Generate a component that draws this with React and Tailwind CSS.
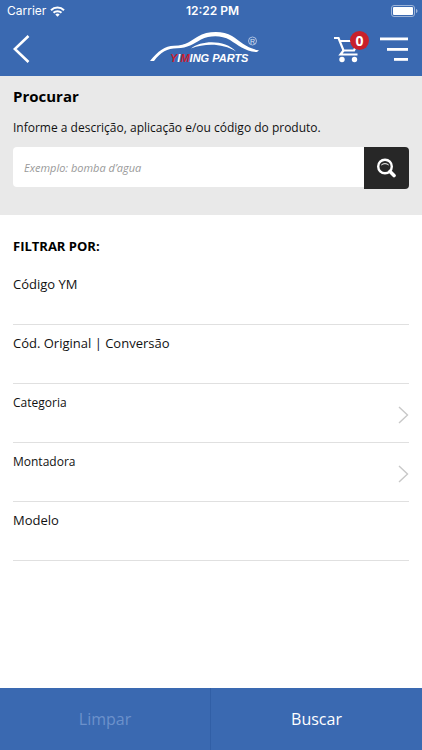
import React, { useState } from 'react';

const filters = [
  { id: 'codigo', label: 'Código YM', type: 'text' },
  { id: 'original', label: 'Cód. Original | Conversão', type: 'text' },
  { id: 'categoria', label: 'Categoria', type: 'picker' },
  { id: 'montadora', label: 'Montadora', type: 'picker' },
  { id: 'modelo', label: 'Modelo', type: 'text' },
];

const StatusBar = () => (
  <div className="grid h-[22px] grid-cols-3 items-center pl-[7px] pr-1 font-['Inter',sans-serif] text-xs">
    <div className="flex items-center gap-1">
      <span>Carrier</span>
      <svg viewBox="0 0 15 11" className="h-[11px] w-[15px]" fill="none" stroke="currentColor" strokeWidth="2">
        <path d="M1 4.2a9.2 9.2 0 0 1 13 0" />
        <path d="M3.5 6.8a5.7 5.7 0 0 1 8 0" />
        <path d="M7.5 10.8 5.3 8.6a3.1 3.1 0 0 1 4.4 0z" fill="currentColor" stroke="none" />
      </svg>
    </div>
    <span className="text-center font-semibold">12:22 PM</span>
    <svg viewBox="0 0 27 12" className="h-3 w-[27px] justify-self-end" fill="none">
      <rect x="0.5" y="0.5" width="23" height="11" rx="2.5" stroke="#9db4d8" />
      <rect x="2" y="2" width="20" height="8" rx="1" fill="#fff" />
      <path d="M25 4v4c1-.4 1.5-1.2 1.5-2s-.5-1.6-1.5-2z" fill="#9db4d8" />
    </svg>
  </div>
);

const Logo = () => (
  <svg viewBox="0 0 122 36" className="h-9 w-[122px]" role="img" aria-label="Yiming Parts">
    <path
      d="M0 30C8 20 15 14.7 24 14.7C37 14.7 41 9 48 5.5C57 0 73 -0.5 82 5C90 10 97 17.5 109 19.3L107 21C95 20.5 88 14 80 9C71 4 60 4.3 51 8.5C43 13 38 17 27 17.3C17 17.6 11 21 4 30Z"
      fill="#fff"
    />
    <path d="M41 17.5C52 8.5 76 9 86 20.5C73 12.5 56 12 41 17.5Z" fill="#fff" />
    <circle cx="102.5" cy="10" r="4" fill="none" stroke="#c7d5ec" strokeWidth="0.8" />
    <text x="102.5" y="12.5" textAnchor="middle" className="font-['Liberation_Sans',sans-serif] text-[7px]" fill="#dbe5f4">
      R
    </text>
    <text x="20" y="31" className="font-['Liberation_Sans',sans-serif] text-[11px] font-bold italic" fill="#fff">
      <tspan fill="#c8202f">Y</tspan>I<tspan fill="#c8202f">M</tspan>ING PARTS
    </text>
  </svg>
);

const CartIcon = () => (
  <svg viewBox="0 0 26 28" className="h-7 w-[26px]" fill="none" stroke="currentColor" strokeWidth="2.2">
    <path d="M0 3h4.5l5 12.5h10.5l4-8.5" />
    <path d="M5.5 6h16M9.5 15.5l-3 4h17" />
    <circle cx="8" cy="24.5" r="2.7" fill="currentColor" stroke="none" />
    <circle cx="20.5" cy="24.5" r="2.7" fill="currentColor" stroke="none" />
  </svg>
);

const Header = ({ cartCount }) => (
  <header className="bg-[#3a69b1] text-white">
    <StatusBar />
    <div className="grid h-[54px] grid-cols-[1fr_auto_1fr] items-center pl-[13px] pr-[14px]">
      <button type="button" aria-label="Voltar" className="justify-self-start">
        <svg viewBox="0 0 17 28" className="h-7 w-[17px]" fill="none" stroke="currentColor" strokeWidth="2.6">
          <path d="M15.5 1 1.8 14l13.7 13" />
        </svg>
      </button>
      <Logo />
      <div className="flex items-center gap-5 justify-self-end">
        <button type="button" aria-label="Carrinho" className="relative">
          <CartIcon />
          <span className="absolute -top-1 left-4 flex h-[19px] w-[19px] items-center justify-center rounded-full bg-[#c8202b] font-['Open_Sans',sans-serif] text-sm font-bold">
            {cartCount}
          </span>
        </button>
        <button type="button" aria-label="Menu">
          <svg viewBox="0 0 28 24" className="h-6 w-7" fill="currentColor">
            <rect x="0" y="0.5" width="28" height="2.8" />
            <rect x="7" y="11" width="21" height="2.8" />
            <rect x="14" y="21" width="14" height="2.8" />
          </svg>
        </button>
      </div>
    </div>
  </header>
);

const SearchIcon = () => (
  <svg viewBox="0 0 20 20" className="h-5 w-5" fill="none" stroke="currentColor">
    <circle cx="8" cy="8.5" r="6.8" strokeWidth="2.4" />
    <path d="M4.3 7c1.7-1.8 5.7-1.8 7.4 0" strokeWidth="1" />
    <path d="m13 13.5 4 4" strokeWidth="3.6" strokeLinecap="round" />
  </svg>
);

const FilterRow = ({ filter, value, onChange }) => {
  if (filter.type === 'picker') {
    return (
      <button
        type="button"
        className="flex h-[59px] w-full justify-between border-b border-[#e0e0e0] pt-[9px] text-left text-xs leading-5"
      >
        <span>{filter.label}</span>
        <svg viewBox="0 0 11 18" className="mt-[13px] h-[18px] w-[11px]" fill="none" stroke="#c8c8c8" strokeWidth="1.4">
          <path d="m1 1 8.5 8-8.5 8" />
        </svg>
      </button>
    );
  }

  return (
    <div className="flex h-[59px] flex-col border-b border-[#e0e0e0] pt-2">
      <label htmlFor={filter.id} className="text-[13px] leading-5">{filter.label}</label>
      <input
        id={filter.id}
        type="text"
        value={value}
        onChange={e => onChange(filter.id, e.target.value)}
        className="min-h-0 w-full flex-1 text-[13px] outline-none"
      />
    </div>
  );
};

const App = () => {
  const [query, setQuery] = useState('');
  const [values, setValues] = useState({});

  const updateValue = (id, value) => {
    setValues(prev => ({ ...prev, [id]: value }));
  };

  const hasFilters = query !== '' || Object.values(values).some(v => v !== '');

  const clearAll = () => {
    setQuery('');
    setValues({});
  };

  return (
    <div className="flex min-h-screen flex-col bg-white font-['Open_Sans',sans-serif] text-[#111]">
      <Header cartCount={0} />

      {/* Search */}
      <section className="bg-[#e9e9e9] px-[13px] pb-[26px] pt-2">
        <h1 className="text-[15px] font-bold leading-6 text-black">Procurar</h1>
        <label htmlFor="search" className="mt-2 block text-xs leading-6">
          Informe a descrição, aplicação e/ou código do produto.
        </label>
        <form className="mt-[7px] flex" onSubmit={e => e.preventDefault()}>
          <input
            id="search"
            type="text"
            value={query}
            onChange={e => setQuery(e.target.value)}
            placeholder="Exemplo: bomba d’agua"
            className="h-10 min-w-0 flex-1 rounded-l-sm bg-white px-[11px] text-[11px] outline-none placeholder:italic placeholder:text-[#999]"
          />
          <button
            type="submit"
            aria-label="Pesquisar"
            className="flex h-[42px] w-[45px] items-center justify-center rounded-r-sm bg-[#272727] text-white"
          >
            <SearchIcon />
          </button>
        </form>
      </section>

      {/* Filters */}
      <main className="flex-1 px-[13px] pt-[21px]">
        <h2 className="mb-[10px] text-[13px] font-bold leading-5 text-black">FILTRAR POR:</h2>
        {filters.map(filter => (
          <FilterRow
            key={filter.id}
            filter={filter}
            value={values[filter.id] || ''}
            onChange={updateValue}
          />
        ))}
      </main>

      <footer className="grid h-[62px] grid-cols-2 bg-[#3a69b1] text-base text-white">
        <button
          type="button"
          onClick={clearAll}
          disabled={!hasFilters}
          className="border-r border-[#315fa6] disabled:text-[#6c91cb]"
        >
          Limpar
        </button>
        <button type="button">Buscar</button>
      </footer>
    </div>
  );
};

export default App;
